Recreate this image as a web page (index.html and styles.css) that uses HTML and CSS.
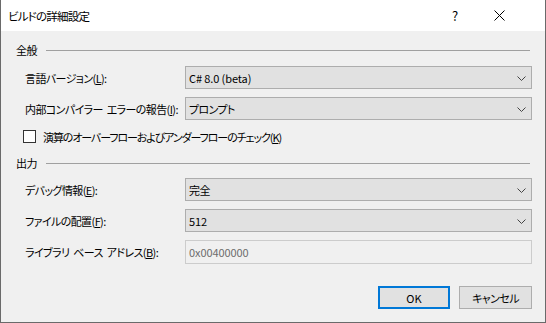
FILE: index.html
```html
<!DOCTYPE html>
<html lang="ja">
<head>
<meta charset="utf-8">
<title>ビルドの詳細設定</title>
<link rel="stylesheet" href="styles.css">
</head>
<body>
<div class="window">
  <div class="titlebar">
    <span class="title">ビルドの詳細設定</span>
    <span class="help">?</span>
    <span class="close"><svg width="11" height="11" viewBox="0 0 11 11"><path d="M0.5 0.5 L10.5 10.5 M10.5 0.5 L0.5 10.5" stroke="#000" stroke-width="1" fill="none"/></svg></span>
  </div>
  <div class="content">
    <div class="group-head"><span>全般</span><span class="rule"></span></div>
    <div class="form first">
      <label class="lbl">言語バージョン(<u>L</u>):</label>
      <div class="select"><span class="latin">C# 8.0 (beta)</span><svg class="chev" width="9" height="5" viewBox="0 0 9 5"><path d="M0.5 0.5 L4.5 4.5 L8.5 0.5" stroke="#444" fill="none"/></svg></div>
      <label class="lbl">内部コンパイラー エラーの報告(<u>I</u>):</label>
      <div class="select"><span>プロンプト</span><svg class="chev" width="9" height="5" viewBox="0 0 9 5"><path d="M0.5 0.5 L4.5 4.5 L8.5 0.5" stroke="#444" fill="none"/></svg></div>
    </div>
    <div class="check-row"><span class="box"></span><span>演算のオーバーフローおよびアンダーフローのチェック(<u>K</u>)</span></div>
    <div class="group-head second"><span>出力</span><span class="rule"></span></div>
    <div class="form second-form">
      <label class="lbl">デバッグ情報(<u>E</u>):</label>
      <div class="select"><span>完全</span><svg class="chev" width="9" height="5" viewBox="0 0 9 5"><path d="M0.5 0.5 L4.5 4.5 L8.5 0.5" stroke="#444" fill="none"/></svg></div>
      <label class="lbl">ファイルの配置(<u>F</u>):</label>
      <div class="select"><span class="latin">512</span><svg class="chev" width="9" height="5" viewBox="0 0 9 5"><path d="M0.5 0.5 L4.5 4.5 L8.5 0.5" stroke="#444" fill="none"/></svg></div>
      <label class="lbl">ライブラリ ベース アドレス(<u>B</u>):</label>
      <div class="textbox latin">0x00400000</div>
    </div>
    <div class="buttons">
      <button class="btn default latin">OK</button>
      <button class="btn">キャンセル</button>
    </div>
  </div>
</div>
</body>
</html>
```

FILE: styles.css
```css
* { box-sizing: border-box; }
html, body { margin: 0; padding: 0; }
body {
  width: 546px;
  height: 323px;
  overflow: hidden;
  font-family: "Noto Sans CJK JP", "Noto Sans", sans-serif;
  font-feature-settings: "palt" 1;
  font-size: 11px;
  letter-spacing: -0.6px;
  color: #000;
  background: #f0f0f0;
}
.latin { letter-spacing: -0.1px; }
.window {
  width: 546px;
  height: 323px;
  border: 1px solid #6a6a6a;
  border-top: none;
  display: flex;
  flex-direction: column;
  background: #f0f0f0;
}
.titlebar {
  height: 31px;
  background: #fff;
  display: flex;
  align-items: center;
  padding-left: 7px;
  flex: none;
}
.title { flex: 1; font-size: 11.5px; line-height: 16px; letter-spacing: -0.8px; }
.help { width: 14px; font-size: 13px; letter-spacing: 0; margin-right: 32px; text-align: center; }
.close { width: 11px; height: 11px; margin-right: 40px; display: flex; }
.content {
  padding: 11px 13px 0 15px;
  display: flex;
  flex-direction: column;
}
.group-head {
  height: 16px;
  display: flex;
  align-items: center;
  gap: 9px;
  line-height: 16px;
}
.group-head.second { margin-top: 12px; }
.rule { flex: 1; height: 1px; background: #a0a0a0; margin-right: 2px; }
.form {
  display: grid;
  grid-template-columns: 160px 1fr;
  row-gap: 8px;
  padding-left: 9px;
  margin-top: 8px;
}
.form.second-form { margin-top: 7px; }
.lbl { height: 23px; display: flex; align-items: center; white-space: pre; word-spacing: 2px; }
.select {
  height: 23px;
  background: #e1e1e1;
  border: 1px solid #adadad;
  display: flex;
  align-items: center;
  justify-content: space-between;
  padding: 0 5px 0 3px;
}
.chev { margin-top: 1px; }
.textbox {
  height: 24px;
  border: 1px solid #cccccc;
  background: #f0f0f0;
  color: #6d6d6d;
  display: flex;
  align-items: center;
  padding-left: 3px;
}
.check-row {
  margin-top: 10px;
  margin-left: 7px;
  height: 13px;
  display: flex;
  align-items: center;
  gap: 7px;
  white-space: nowrap;
  letter-spacing: -1.1px;
}
.box {
  width: 13px;
  height: 13px;
  border: 1px solid #333;
  background: #fff;
  flex: none;
}
.buttons {
  margin-top: 22px;
  display: flex;
  justify-content: flex-end;
  gap: 9px;
}
.btn {
  font: inherit;
  letter-spacing: inherit;
  height: 23px;
  width: 73px;
  background: #e1e1e1;
  border: 1px solid #adadad;
  color: #000;
  padding: 0;
}
.btn.default { width: 72px; border: 2px solid #0078d7; letter-spacing: 0; }
```
